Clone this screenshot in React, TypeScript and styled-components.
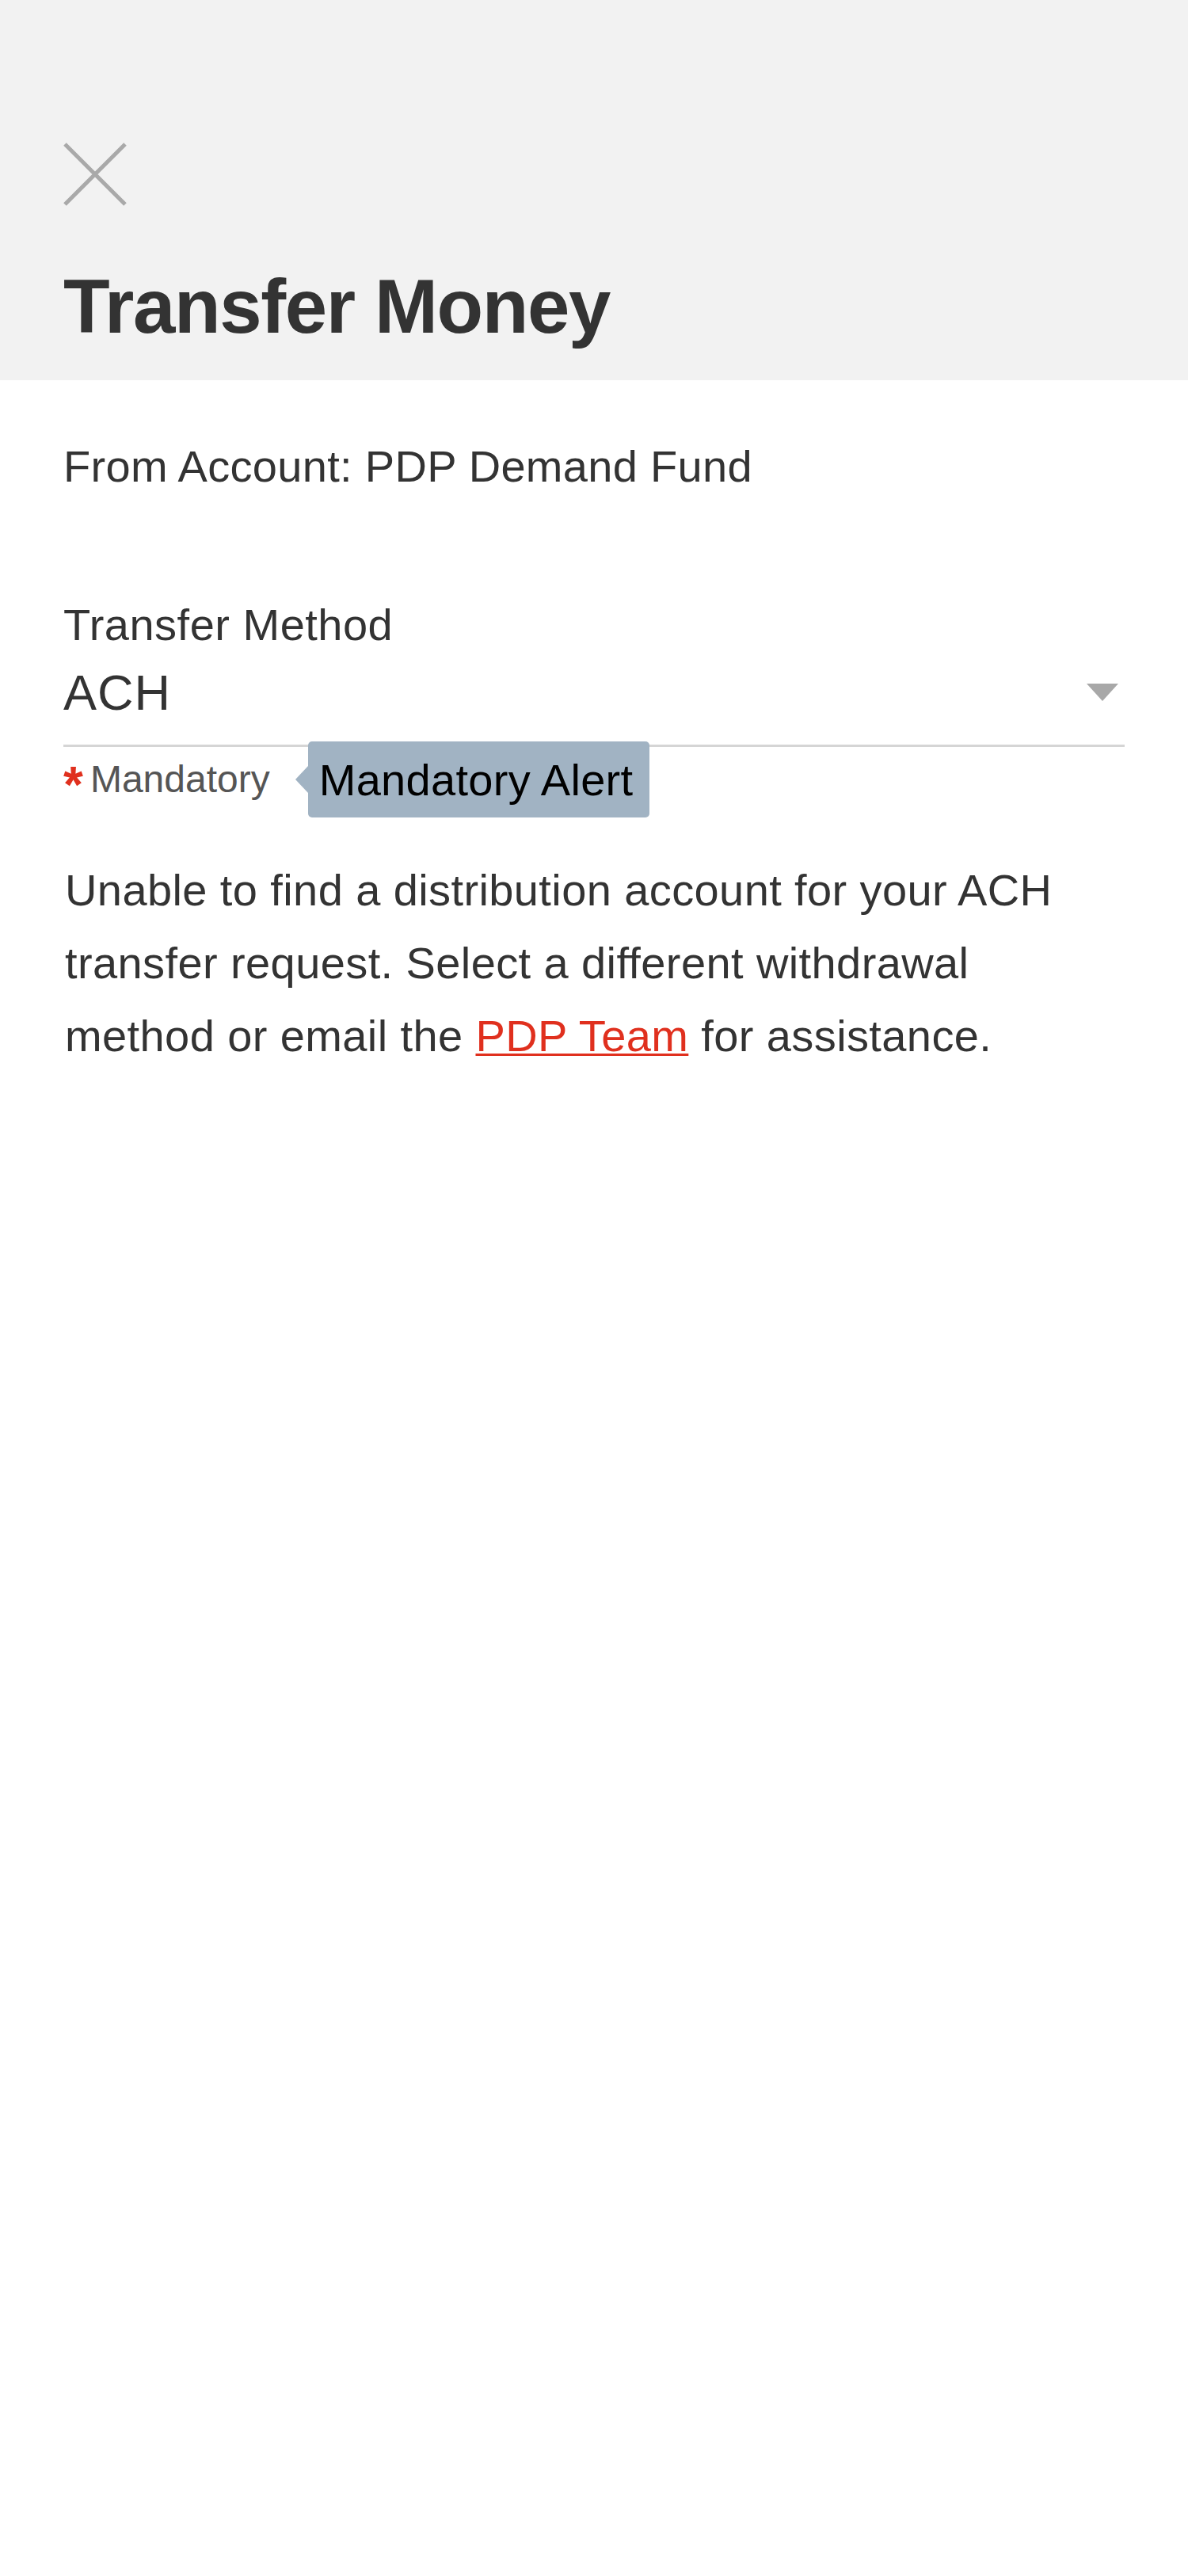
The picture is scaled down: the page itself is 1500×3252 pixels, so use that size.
import styled, { createGlobalStyle } from 'styled-components';

const GlobalStyle = createGlobalStyle`
  html,
  body {
    margin: 0;
    padding: 0;
    background: #ffffff;
  }
  body {
    font-family: 'Liberation Sans', Arial, Helvetica, sans-serif;
    color: #333333;
  }
`;

const App = () => {
  return (
    <Page>
      <GlobalStyle />
      <Header>
        <CloseButton type="button" aria-label="Close">
          <svg width="80" height="80" viewBox="0 0 80 80" fill="none">
            <path d="M2 2 L78 78 M78 2 L2 78" stroke="#a9a9a9" strokeWidth="5" />
          </svg>
        </CloseButton>
        <Title>Transfer Money</Title>
      </Header>

      <Body>
        <FromAccount>From Account: PDP Demand Fund</FromAccount>

        <Field>
          <FieldLabel>Transfer Method</FieldLabel>
          <SelectRow>
            <SelectValue>ACH</SelectValue>
            <Caret />
          </SelectRow>
          <HintRow>
            <Asterisk>*</Asterisk>
            <HintText>Mandatory</HintText>
            <AlertBubble>Mandatory Alert</AlertBubble>
          </HintRow>
        </Field>

        <Message>
          Unable to find a distribution account for your ACH transfer request. Select a different
          withdrawal method or email the <TeamLink href="#">PDP Team</TeamLink> for assistance.
        </Message>
      </Body>
    </Page>
  );
};

const Page = styled.div`
  min-height: 3252px;
  background: #ffffff;
`;

const Header = styled.header`
  display: flex;
  flex-direction: column;
  align-items: flex-start;
  padding: 180px 80px 38px;
  background-color: #f2f2f2;
`;

const CloseButton = styled.button`
  display: flex;
  width: 80px;
  height: 80px;
  padding: 0;
  border: none;
  background: none;
  cursor: pointer;
`;

const Title = styled.h1`
  margin: 72px 0 0;
  font-size: 96px;
  line-height: 110px;
  font-weight: 700;
  letter-spacing: -1.4px;
  color: #333333;
`;

const Body = styled.main`
  padding: 77px 80px 0;
`;

const FromAccount = styled.p`
  margin: 0;
  font-size: 56px;
  line-height: 64px;
  letter-spacing: 0.3px;
  color: #333333;
`;

const Field = styled.section`
  margin-top: 136px;
`;

const FieldLabel = styled.div`
  font-size: 56px;
  line-height: 64px;
  letter-spacing: 0.5px;
  color: #333333;
`;

const SelectRow = styled.div`
  display: flex;
  align-items: center;
  justify-content: space-between;
  margin-top: 17px;
  padding-bottom: 30px;
  border-bottom: 3px solid #d5d5d5;
`;

const SelectValue = styled.span`
  font-size: 63px;
  line-height: 72px;
  letter-spacing: 1px;
  color: #333333;
`;

const Caret = styled.span`
  width: 0;
  height: 0;
  margin-right: 8px;
  border-left: 20px solid transparent;
  border-right: 20px solid transparent;
  border-top: 22px solid #a8a8a8;
`;

const HintRow = styled.div`
  display: flex;
  align-items: center;
  height: 96px;
  margin-top: -7px;
`;

const Asterisk = styled.span`
  align-self: flex-start;
  height: 40px;
  margin-top: 35px;
  font-size: 64px;
  font-weight: 700;
  line-height: 40px;
  color: #e0301e;
`;

const HintText = styled.span`
  margin-left: 9px;
  font-size: 48px;
  line-height: 56px;
  color: #555555;
`;

const AlertBubble = styled.span`
  position: relative;
  display: flex;
  align-items: center;
  height: 96px;
  margin-left: 48px;
  padding: 0 21px 0 14px;
  border-radius: 5px;
  font-size: 56px;
  letter-spacing: 0.3px;
  color: #000000;
  background-color: #a1b3c3;

  &::before {
    content: '';
    position: absolute;
    left: -16px;
    top: 50%;
    margin-top: -17px;
    border-top: 17px solid transparent;
    border-bottom: 17px solid transparent;
    border-right: 16px solid #a1b3c3;
  }
`;

const Message = styled.p`
  margin: 46px 0 0;
  padding-left: 2px;
  max-width: 1320px;
  font-size: 56px;
  line-height: 92px;
  letter-spacing: 0.4px;
  color: #333333;
`;

const TeamLink = styled.a`
  color: #e0301e;
  text-decoration: underline;
  text-decoration-thickness: 3px;
  text-underline-offset: 3px;
`;

export default App;
